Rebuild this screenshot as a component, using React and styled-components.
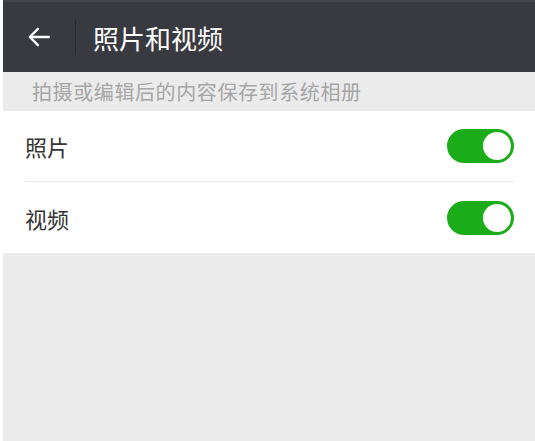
import styled, { createGlobalStyle } from "styled-components";

const GlobalStyle = createGlobalStyle`
  html, body {
    margin: 0;
    padding: 0;
    background: #ffffff;
  }
  body {
    font-family: "Noto Sans CJK SC", "Noto Sans", sans-serif;
  }
`;

const Page = styled.div`
  width: 535px;
  height: 441px;
  padding-left: 3px;
  box-sizing: border-box;
  display: flex;
  flex-direction: column;
  background: #ffffff;
`;

const Screen = styled.div`
  flex: 1;
  display: flex;
  flex-direction: column;
  background: #ebebeb;
`;

const Header = styled.header`
  height: 72px;
  display: flex;
  align-items: center;
  background: #393a3f;
  border-top: 2px solid #44454a;
  box-sizing: border-box;
`;

const BackButton = styled.button`
  width: 72px;
  height: 100%;
  display: flex;
  align-items: center;
  justify-content: center;
  padding: 0;
  margin: 0;
  border: none;
  background: transparent;
  color: #ffffff;
  cursor: pointer;
`;

const Divider = styled.span`
  width: 1px;
  height: 36px;
  background: #2c2d31;
`;

const Title = styled.h1`
  margin: 0 0 0 17px;
  font-size: 26px;
  font-weight: 400;
  color: #ffffff;
`;

const Caption = styled.div`
  height: 39px;
  display: flex;
  align-items: center;
  padding-left: 29px;
  font-size: 20px;
  letter-spacing: 0.6px;
  color: #a6a6a6;
`;

const Group = styled.section`
  background: #ffffff;
  padding: 0 21px 0 22px;
`;

const Row = styled.div`
  height: 71px;
  display: flex;
  align-items: center;
  justify-content: space-between;
  box-sizing: border-box;
  border-bottom: ${(p) => (p.$last ? "none" : "1px solid #e8e8e8")};
`;

const Label = styled.span`
  font-size: 22px;
  color: #353535;
`;

const Switch = styled.span`
  width: 67px;
  height: 34px;
  border-radius: 17px;
  background: ${(p) => (p.$on ? "#1aad19" : "#dfdfdf")};
  display: flex;
  align-items: center;
  justify-content: ${(p) => (p.$on ? "flex-end" : "flex-start")};
  padding: 3px;
  box-sizing: border-box;
`;

const Knob = styled.span`
  width: 28px;
  height: 28px;
  border-radius: 50%;
  background: #ffffff;
`;

function Toggle({ on }) {
  return (
    <Switch $on={on}>
      <Knob />
    </Switch>
  );
}

function BackArrow() {
  return (
    <svg width="26" height="26" viewBox="0 0 24 24" fill="none" stroke="currentColor" strokeWidth="2.2" strokeLinecap="round" strokeLinejoin="round">
      <path d="M21 12H4" />
      <path d="M11 4.5L3.5 12 11 19.5" />
    </svg>
  );
}

export default function App() {
  return (
    <Page>
      <GlobalStyle />
      <Screen>
        <Header>
          <BackButton type="button">
            <BackArrow />
          </BackButton>
          <Divider />
          <Title>照片和视频</Title>
        </Header>
        <Caption>拍摄或编辑后的内容保存到系统相册</Caption>
        <Group>
          <Row>
            <Label>照片</Label>
            <Toggle on />
          </Row>
          <Row $last>
            <Label>视频</Label>
            <Toggle on />
          </Row>
        </Group>
      </Screen>
    </Page>
  );
}
